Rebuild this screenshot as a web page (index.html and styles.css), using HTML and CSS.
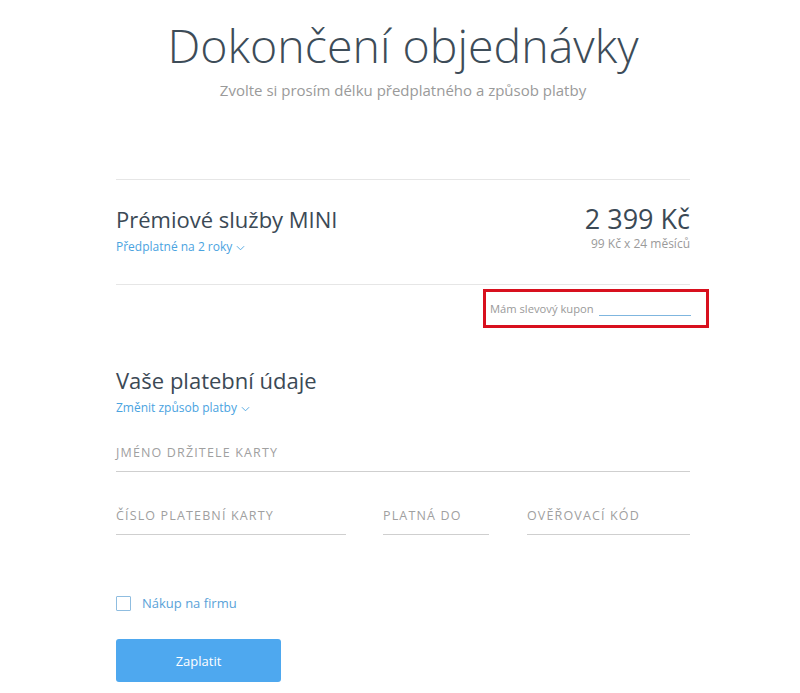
FILE: index.html
```html
<!DOCTYPE html>
<html lang="cs">
<head>
<meta charset="utf-8">
<title>Dokončení objednávky</title>
<link rel="stylesheet" href="styles.css">
</head>
<body>
<div class="page">
  <header class="head">
    <h1 class="title">Dokončení objednávky</h1>
    <p class="subtitle">Zvolte si prosím délku předplatného a způsob platby</p>
  </header>

  <section class="product">
    <div class="product-left">
      <h2 class="h2">Prémiové služby MINI</h2>
      <a class="link">Předplatné na 2 roky <svg class="chev" viewBox="0 0 10 6" width="9" height="6"><path d="M1 1l4 4 4-4" fill="none" stroke="currentColor" stroke-width="1"/></svg></a>
    </div>
    <div class="product-right">
      <div class="price">2 399 Kč</div>
      <div class="price-note">99 Kč x 24 měsíců</div>
    </div>
  </section>

  <div class="coupon-row">
    <div class="coupon">
      <span class="coupon-label">Mám slevový kupon</span>
      <span class="coupon-input"></span>
    </div>
  </div>

  <section class="payment">
    <h2 class="h2">Vaše platební údaje</h2>
    <a class="link">Změnit způsob platby <svg class="chev" viewBox="0 0 10 6" width="9" height="6"><path d="M1 1l4 4 4-4" fill="none" stroke="currentColor" stroke-width="1"/></svg></a>

    <div class="field full">JMÉNO DRŽITELE KARTY</div>
    <div class="field-row">
      <div class="field card">ČÍSLO PLATEBNÍ KARTY</div>
      <div class="field exp">PLATNÁ DO</div>
      <div class="field cvc">OVĚŘOVACÍ KÓD</div>
    </div>

    <label class="check">
      <span class="box"></span>
      <span class="check-text">Nákup na firmu</span>
    </label>

    <button class="pay">Zaplatit</button>
  </section>
</div>
</body>
</html>
```

FILE: styles.css
```css
html, body {
  margin: 0;
  padding: 0;
  background: #fff;
}
body {
  font-family: "Open Sans", "Liberation Sans", sans-serif;
  color: #3b4955;
}
.page {
  width: 574px;
  margin: 0 auto;
  padding-left: 6px;
}
.head {
  text-align: center;
  padding-top: 14px;
}
.title {
  margin: 0;
  font-weight: 300;
  font-size: 46.5px;
  line-height: 62px;
  color: #3d4c58;
}
.subtitle {
  margin: 4px 0 0;
  font-size: 15px;
  line-height: 20px;
  color: #9a9a9a;
}
.product {
  margin-top: 79px;
  border-top: 1px solid #e6e6e6;
  border-bottom: 1px solid #e6e6e6;
  display: flex;
  justify-content: space-between;
  padding: 24px 0 28px;
  height: 52px;
}
.h2 {
  margin: 0;
  font-weight: 400;
  font-size: 22px;
  line-height: 30px;
  color: #3b4955;
}
.link {
  display: inline-flex;
  align-items: center;
  gap: 4px;
  font-size: 12px;
  line-height: 20px;
  color: #4aa3df;
}
.chev {
  margin-top: 1px;
}
.product-right {
  text-align: right;
}
.price {
  font-size: 27px;
  line-height: 28px;
  padding-top: 1px;
  color: #3b4955;
}
.price-note {
  margin-top: 4px;
  font-size: 12px;
  line-height: 14px;
  color: #9a9a9a;
}
.coupon-row {
  display: flex;
  justify-content: flex-end;
  margin-right: -19px;
  margin-top: 4px;
}
.coupon {
  width: 216px;
  height: 33px;
  border: 3px solid #d8101e;
  display: flex;
  align-items: center;
  padding-left: 4px;
  gap: 5px;
}
.coupon-label {
  font-size: 11.2px;
  color: #9a9a9a;
  line-height: 14px;
}
.coupon-input {
  width: 92px;
  border-bottom: 1px solid #7fb6df;
  margin-top: 14px;
}
.payment {
  margin-top: 37px;
}
.field {
  font-size: 12.5px;
  letter-spacing: 1.15px;
  color: #a0a0a0;
  border-bottom: 1px solid #cfcfcf;
  padding-bottom: 9px;
  line-height: 19px;
}
.full {
  margin-top: 25px;
}
.field-row {
  display: flex;
  margin-top: 34px;
}
.card { width: 230px; }
.exp { width: 106px; margin-left: 37px; }
.cvc { width: 163px; margin-left: 38px; }
.check {
  display: flex;
  align-items: center;
  gap: 11px;
  margin-top: 60px;
}
.box {
  width: 13px;
  height: 13px;
  border: 1px solid #8fbde0;
  border-radius: 1px;
}
.check-text {
  font-size: 13px;
  color: #5aa2d8;
  line-height: 16px;
}
.pay {
  display: block;
  margin-top: 28px;
  width: 165px;
  height: 43px;
  border: 0;
  border-radius: 3px;
  background: #4ea8ef;
  color: #fff;
  font-family: "Open Sans", "Liberation Sans", sans-serif;
  font-size: 13px;
  cursor: pointer;
}
```
